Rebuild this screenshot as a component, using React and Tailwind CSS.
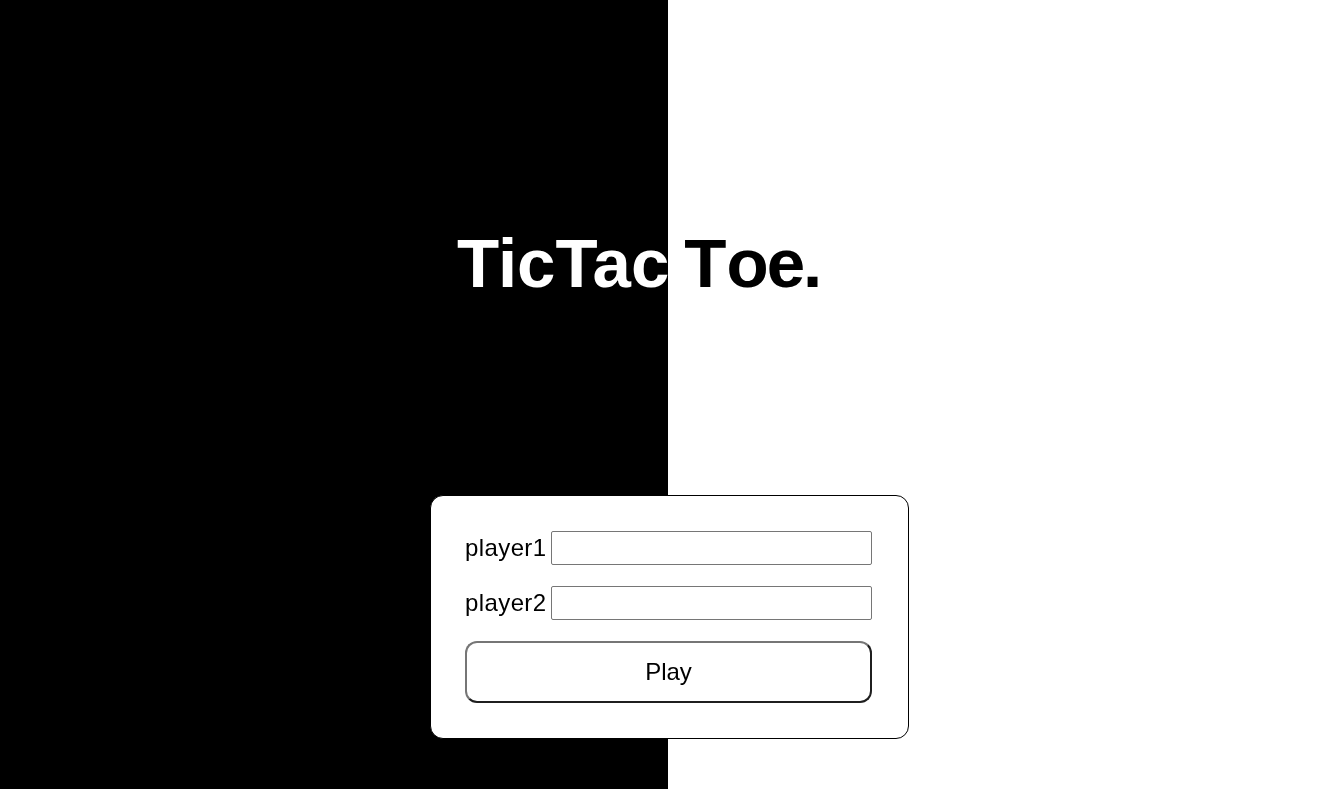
export default function App() {
  return (
    <div
      className="h-[789px] w-full overflow-hidden bg-[linear-gradient(to_right,#000_0,#000_668px,#fff_668px,#fff_100%)] font-['Liberation_Sans',Arial,sans-serif]"
    >
      <div className="pt-[229px] pl-[457px]">
        <h1 className="flex text-[69px] font-bold leading-none text-white mix-blend-difference whitespace-nowrap">
          <span>Tic</span>
          <span className="tracking-[-5px]">T</span>
          <span>ac</span>
          <span className="ml-[15px]">T</span>
          <span className="tracking-[-2px]">oe.</span>
        </h1>
      </div>
      <div className="ml-[430px] mt-[197px] w-[479px] rounded-[13px] border border-black bg-white px-[34px] pt-[35px] pb-[35px]">
        <div className="flex flex-col gap-[21px]">
          <div className="flex items-center">
            <label className="text-[24px] leading-none tracking-[0.4px] text-black w-[86px]">player1</label>
            <input className="h-[34px] w-[321px] rounded-[2px] border border-[#767676] bg-white px-1 outline-none" />
          </div>
          <div className="flex items-center">
            <label className="text-[24px] leading-none tracking-[0.4px] text-black w-[86px]">player2</label>
            <input className="h-[34px] w-[321px] rounded-[2px] border border-[#767676] bg-white px-1 outline-none" />
          </div>
          <button className="h-[62px] w-[407px] rounded-[12px] border-2 border-t-[#767676] border-l-[#767676] border-b-[#1f1f1f] border-r-[#1f1f1f] bg-white text-[24px] text-black">
            Play
          </button>
        </div>
      </div>
    </div>
  );
}
